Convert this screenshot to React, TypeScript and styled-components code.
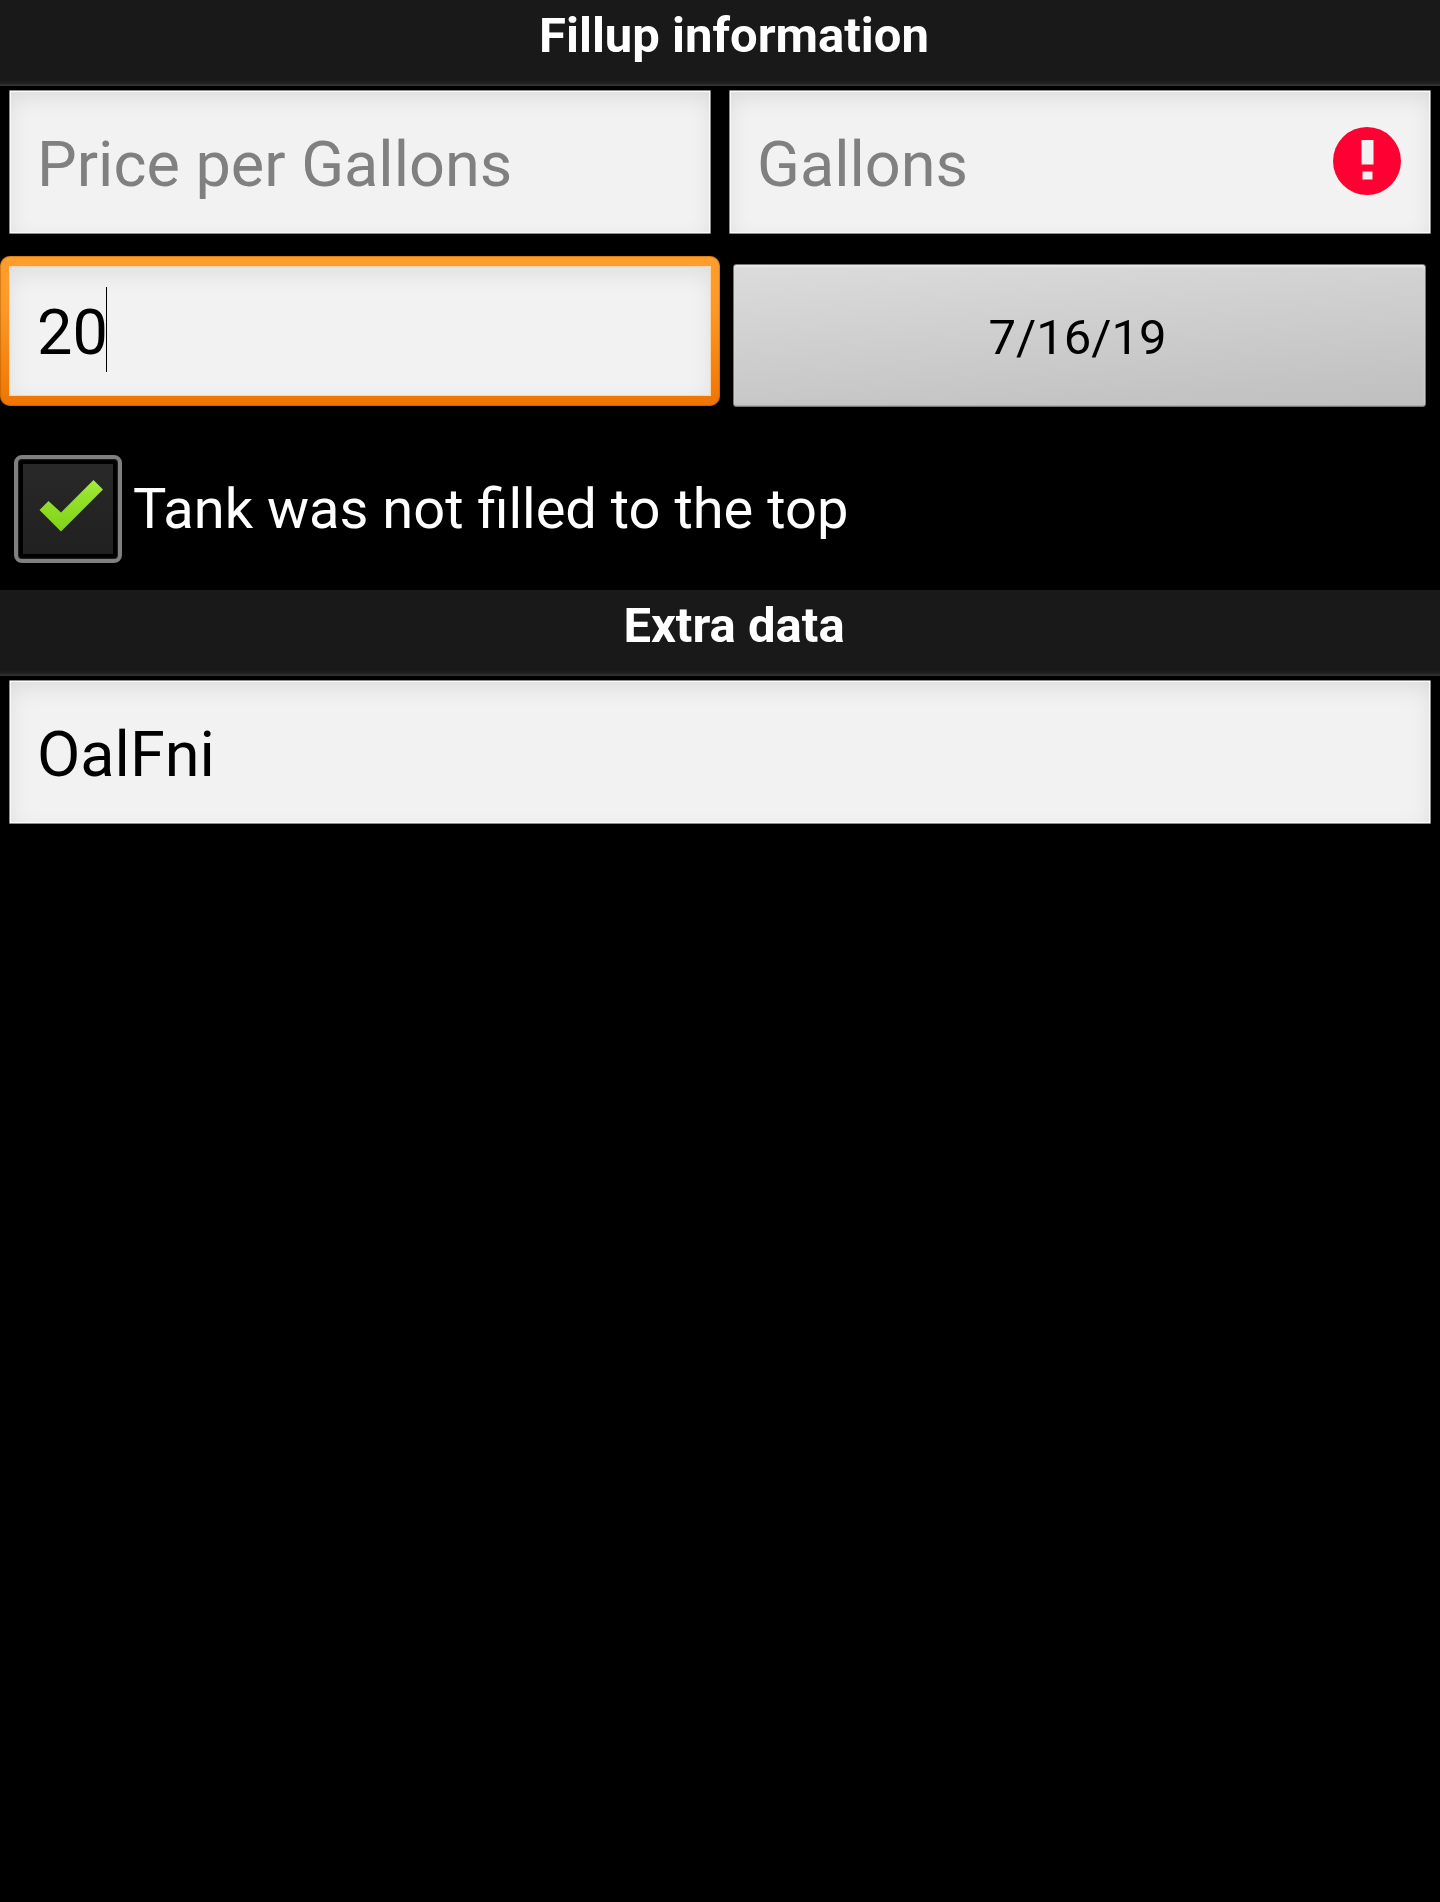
import React, { useState } from "react";
import styled, { createGlobalStyle, css } from "styled-components";

const GlobalStyle = createGlobalStyle`
  *, *::before, *::after { box-sizing: border-box; }
  body {
    margin: 0;
    background: #000;
    font-family: Roboto, "Noto Sans", sans-serif;
  }
`;

const Screen = styled.main`
  display: flex;
  flex-direction: column;
  min-height: 100vh;
  background: #000;
  color: #fff;
`;

const SectionTitle = styled.h2`
  margin: 0;
  height: 86px;
  padding: 7px 0 0 28px;
  font-size: 49px;
  line-height: 58px;
  font-weight: 700;
  text-align: center;
  background: linear-gradient(#191919 0, #191919 80px, #202020 83px, #303030 85px, #383838 86px);
`;

const Row = styled.div<{ $columns?: number }>`
  display: grid;
  grid-template-columns: repeat(${(p) => p.$columns ?? 1}, minmax(0, 1fr));
  height: 168px;
`;

const Cell = styled.div<{ $focused?: boolean }>`
  position: relative;
  display: flex;
  align-items: flex-start;
  padding: ${(p) => (p.$focused ? "2px 0 0" : "4px 9px 0")};
`;

const fieldText = css`
  font-family: inherit;
  font-size: 63px;
  color: #000;
  caret-color: transparent;
  outline: none;
  &::placeholder { color: #808080; opacity: 1; }
`;

const Field = styled.input`
  ${fieldText}
  width: 100%;
  height: 144px;
  padding: 5px 27px 0;
  border: 1px solid #8c8c8c;
  border-radius: 1px;
  background: #f2f2f2;
  box-shadow: inset 0 0 0 1px #fafafa, inset 0 8px 26px -4px rgba(0, 0, 0, 0.11);
`;

const FocusFrame = styled.div`
  position: relative;
  width: 100%;
  height: 150px;
  padding: 10px 9px;
  border-radius: 10px;
  background: linear-gradient(#ff9e2c 0, #fd9826 35%, #f27a07 90%, #f07400 100%);
  box-shadow: inset 0 0 1px 1px rgba(150, 80, 0, 0.4);
`;

const FocusedField = styled.input`
  ${fieldText}
  display: block;
  width: 100%;
  height: 130px;
  padding: 2px 27px 0;
  border: 1px solid #f6d5ae;
  background: #f2f2f2;
  box-shadow: inset 0 8px 26px -4px rgba(0, 20, 30, 0.1);
`;

const Caret = styled.span`
  position: absolute;
  top: 31px;
  left: calc(35px + 2ch);
  width: 1px;
  height: 85px;
  font-size: 63px;
  background: #000;
`;

const AlertIcon = styled.svg`
  position: absolute;
  top: 41px;
  right: 39px;
  width: 68px;
  height: 68px;
`;

const DateCell = styled.div`
  padding: 10px 14px 0 13px;
`;

const DateButton = styled.button`
  display: block;
  width: 100%;
  height: 143px;
  padding: 3px 4px 0 0;
  border: 1px solid #777;
  border-radius: 3px;
  background: linear-gradient(175deg, #dcdcdc 0, #d0d0d0 40%, #c3c3c3 85%, #c0c0c0 100%);
  box-shadow: inset 0 2px 2px #e8e6e8, inset 0 -1px 1px #aaa;
  font-family: inherit;
  font-size: 49px;
  color: #000;
`;

const CheckRow = styled.label`
  display: flex;
  align-items: center;
  gap: 11px;
  height: 168px;
  padding: 5px 14px 0;
  font-size: 56px;
  line-height: 66px;
`;

const CheckStack = styled.span`
  display: grid;
  flex: none;
  width: 108px;
  height: 108px;
  & > * { grid-area: 1 / 1; }
`;

const CheckInput = styled.input`
  appearance: none;
  width: 108px;
  height: 108px;
  margin: 0;
  padding: 5px;
  border: 4px solid #808080;
  border-radius: 8px;
  background: linear-gradient(#292929, #202020) content-box, #000;
  box-shadow: inset 0 0 1px 1px #222;
  &:not(:checked) + svg { visibility: hidden; }
`;

const CheckMark = styled.svg`
  width: 108px;
  height: 108px;
  pointer-events: none;
`;

const CheckText = styled.span``;

export default function App() {
  const [price, setPrice] = useState("");
  const [gallons, setGallons] = useState("");
  const [odometer, setOdometer] = useState("20");
  const [partial, setPartial] = useState(true);
  const [notes, setNotes] = useState("OalFni");

  return (
    <Screen>
      <GlobalStyle />
      <SectionTitle>Fillup information</SectionTitle>
      <Row $columns={2}>
        <Cell>
          <Field
            aria-label="Price per Gallons"
            placeholder="Price per Gallons"
            value={price}
            onChange={(e) => setPrice(e.target.value)}
          />
        </Cell>
        <Cell>
          <Field
            aria-label="Gallons"
            aria-invalid="true"
            placeholder="Gallons"
            value={gallons}
            onChange={(e) => setGallons(e.target.value)}
          />
          <AlertIcon viewBox="0 0 68 68" aria-hidden="true">
            <circle cx="34" cy="34" r="34" fill="#ff0033" />
            <path d="M28.5 13h12v24.500h-12zM29.500 44.500h10v8h-10z" fill="#f1f1f1" />
          </AlertIcon>
        </Cell>
      </Row>
      <Row $columns={2}>
        <Cell $focused>
          <FocusFrame>
            <FocusedField
              aria-label="Odometer"
              value={odometer}
              onChange={(e) => setOdometer(e.target.value)}
            />
            <Caret />
          </FocusFrame>
        </Cell>
        <DateCell>
          <DateButton type="button">7/16/19</DateButton>
        </DateCell>
      </Row>
      <CheckRow>
        <CheckStack>
          <CheckInput
            type="checkbox"
            checked={partial}
            onChange={(e) => setPartial(e.target.checked)}
          />
          <CheckMark viewBox="0 0 108 108" aria-hidden="true">
            <defs>
              <linearGradient id="tick" x1="0" y1="0" x2="0" y2="1">
                <stop offset="0" stopColor="#a6ec3c" />
                <stop offset="0.3" stopColor="#95e22a" />
                <stop offset="1" stopColor="#7fd31a" />
              </linearGradient>
            </defs>
            <path d="M25.500 55L34.500 46L47 57.500L79.500 25L89 34.500L47 76.500Z" fill="url(#tick)" />
          </CheckMark>
        </CheckStack>
        <CheckText>Tank was not filled to the top</CheckText>
      </CheckRow>
      <SectionTitle>Extra data</SectionTitle>
      <Row>
        <Cell>
          <Field
            aria-label="Extra data"
            value={notes}
            onChange={(e) => setNotes(e.target.value)}
          />
        </Cell>
      </Row>
    </Screen>
  );
}
